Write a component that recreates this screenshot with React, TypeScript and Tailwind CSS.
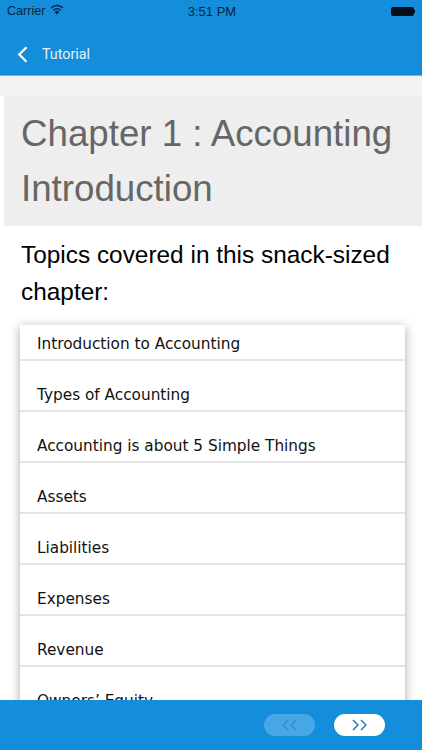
import React from "react";

const topics = [
  "Introduction to Accounting",
  "Types of Accounting",
  "Accounting is about 5 Simple Things",
  "Assets",
  "Liabilities",
  "Expenses",
  "Revenue",
  "Owners’ Equity",
];

function Wifi() {
  return (
    <svg width="14" height="11" viewBox="0 0 14 11" className="ml-[5px] mb-[3px]">
      <path d="M7 10.5 4.8 8a3 3 0 0 1 4.4 0Z" fill="#0a2540" />
      <path d="M3.4 6.4a5 5 0 0 1 7.2 0M1.2 4a8 8 0 0 1 11.6 0" fill="none" stroke="#0a2540" strokeWidth="1.5" />
    </svg>
  );
}

function Chevrons({ dir, color }: { dir: "left" | "right"; color: string }) {
  const d = dir === "right" ? "M1 1l5 5-5 5M9 1l5 5-5 5" : "M6 1L1 6l5 5M14 1L9 6l5 5";
  return (
    <svg width="15" height="12" viewBox="0 0 15 12">
      <path d={d} fill="none" stroke={color} strokeWidth="1.5" />
    </svg>
  );
}

export default function App() {
  return (
    <div className="h-[750px] w-[422px] flex flex-col overflow-hidden bg-white font-['Liberation_Sans',sans-serif]">
      <header className="h-[76px] shrink-0 bg-[#148ddb] border-b border-[#6db8ea]">
        <div className="h-[22px] pt-[1px] flex items-center justify-between px-[7px] relative text-[#0a2540] text-[12.6px]">
          <div className="flex items-center">
            <span>Carrier</span>
            <Wifi />
          </div>
          <span className="absolute left-[2px] right-0 text-center text-[13px] font-medium">3:51 PM</span>
          <div className="flex items-center">
            <div className="w-[23px] h-[9px] rounded-[2px] bg-[#050f1c]" />
            <div className="w-[1px] h-[3px] bg-[#050f1c]" />
          </div>
        </div>
        <div className="h-[53px] pt-[12px] flex items-center pl-[17px] text-white">
          <svg width="11" height="17" viewBox="0 0 11 17">
            <path d="M9.5 1.2 2.2 8.5l7.3 7.3" fill="none" stroke="#fff" strokeWidth="2.2" />
          </svg>
          <span className="ml-[14px] text-[14.3px] text-[#e4f2fb] font-['Roboto',sans-serif]">Tutorial</span>
        </div>
      </header>

      <main className="flex-1 min-h-0 overflow-hidden">
        <div className="h-[20px] bg-[#f3f3f3]" />
        <h1 className="ml-[4px] h-[130px] bg-[#eeeeee] pl-[17px] pt-[10px] text-[#666666] text-[36.7px] leading-[55px]">
          Chapter 1 : Accounting Introduction
        </h1>
        <p className="mt-[10px] px-[21px] text-black text-[24.4px] leading-[37px]">
          Topics covered in this snack-sized chapter:
        </p>
        <ul className="ml-[20px] mr-[17px] mt-[15px] bg-white shadow-[0_2px_10px_rgba(0,0,0,0.35)] font-['DejaVu_Sans',sans-serif] text-[15.3px] text-[#111111]">
          {topics.map((t) => (
            <li key={t} className="h-[51px] border-b-2 border-[#e4e4e4] pl-[17px] pt-[23px] leading-[22px] first:h-[36px] first:pt-[8px]">
              {t}
            </li>
          ))}
        </ul>
      </main>

      <footer className="h-[50px] shrink-0 bg-[#148ddb] flex items-center justify-end pr-[37px] gap-[19px]">
        <div className="w-[51px] h-[22px] rounded-full bg-[#48a8e5] flex items-center justify-center">
          <Chevrons dir="left" color="#2f8fd0" />
        </div>
        <div className="w-[51px] h-[22px] rounded-full bg-white flex items-center justify-center">
          <Chevrons dir="right" color="#2a7cc0" />
        </div>
      </footer>
    </div>
  );
}
